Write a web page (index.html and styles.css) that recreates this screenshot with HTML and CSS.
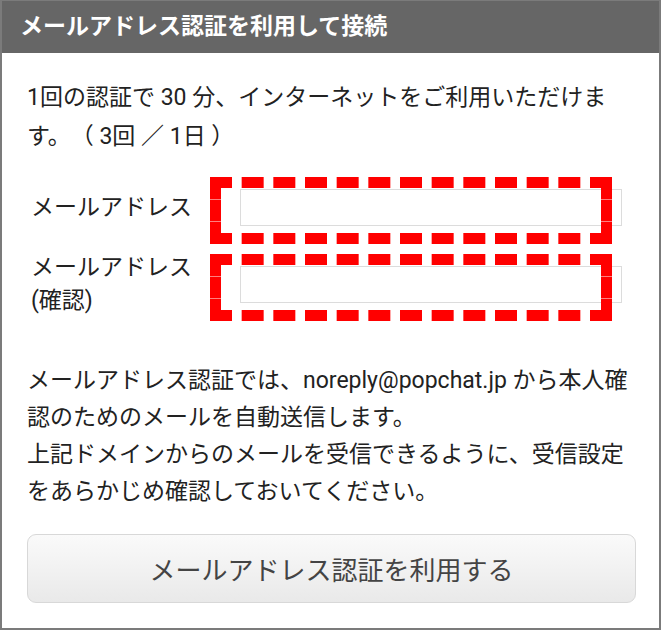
FILE: index.html
```html
<!DOCTYPE html>
<html lang="ja">
<head>
<meta charset="utf-8">
<title>メールアドレス認証</title>
<link rel="stylesheet" href="styles.css">
</head>
<body>
<div class="panel">
  <div class="panel-head">メールアドレス認証を利用して接続</div>
  <div class="panel-body">
    <p class="lead">1回の認証で 30 分、インターネットをご利用いただけます。（ 3回 ／ 1日 ）</p>
    <div class="form">
      <div class="row">
        <label class="label">メールアドレス</label>
        <div class="field">
          <input class="input" type="email">
          <span class="mark"></span>
        </div>
      </div>
      <div class="row">
        <label class="label">メールアドレス<br>(確認)</label>
        <div class="field">
          <input class="input" type="email">
          <span class="mark"></span>
        </div>
      </div>
    </div>
    <p class="note">メールアドレス認証では、noreply@popchat.jp から本人確認のためのメールを自動送信します。<br>上記ドメインからのメールを受信できるように、受信設定をあらかじめ確認しておいてください。</p>
    <button class="submit" type="button">メールアドレス認証を利用する</button>
  </div>
</div>
</body>
</html>
```

FILE: styles.css
```css
* { box-sizing: border-box; }
html, body { margin: 0; padding: 0; background: #fff; }
body {
  font-family: Roboto, "Noto Sans CJK JP", sans-serif;
  color: #222;
  text-spacing-trim: space-all;
}
.panel {
  width: 661px;
  border: 2px solid #7b7b7b;
  border-top-width: 1px;
  background: #fff;
}
.panel-head {
  height: 52px;
  background: #666;
  color: #fff;
  font-weight: 700;
  font-size: 23px;
  line-height: 52px;
  padding-left: 18px;
}
.panel-body {
  padding: 25px 23px 25px 25px;
}
.lead {
  margin: 0;
  font-size: 23px;
  line-height: 39px;
}
.form {
  margin-top: 33px;
  display: flex;
  flex-direction: column;
  gap: 25px;
  padding-left: 4px;
}
.row {
  display: flex;
  align-items: center;
}
.label {
  width: 209px;
  font-size: 23px;
  line-height: 33px;
}
.field {
  position: relative;
  width: 382px;
}
.input {
  display: block;
  width: 382px;
  height: 37px;
  border: 1px solid #dcdcdc;
  background: #fff;
  margin: 0;
  padding: 0;
}
.mark {
  position: absolute;
  left: -30px;
  right: 10px;
  top: -12px;
  bottom: -18px;
  border: 11px dashed #ff0000;
  pointer-events: none;
}
.note {
  margin: 45px 0 0;
  font-size: 23px;
  line-height: 37px;
}
.submit {
  display: block;
  width: 609px;
  height: 69px;
  margin-top: 24px;
  border: 1px solid #d8d8d8;
  border-radius: 9px;
  background: linear-gradient(#fafafa, #e9e9e9);
  color: #444;
  font-family: Roboto, "Noto Sans CJK JP", sans-serif;
  font-size: 26px;
  padding: 0;
}
```
